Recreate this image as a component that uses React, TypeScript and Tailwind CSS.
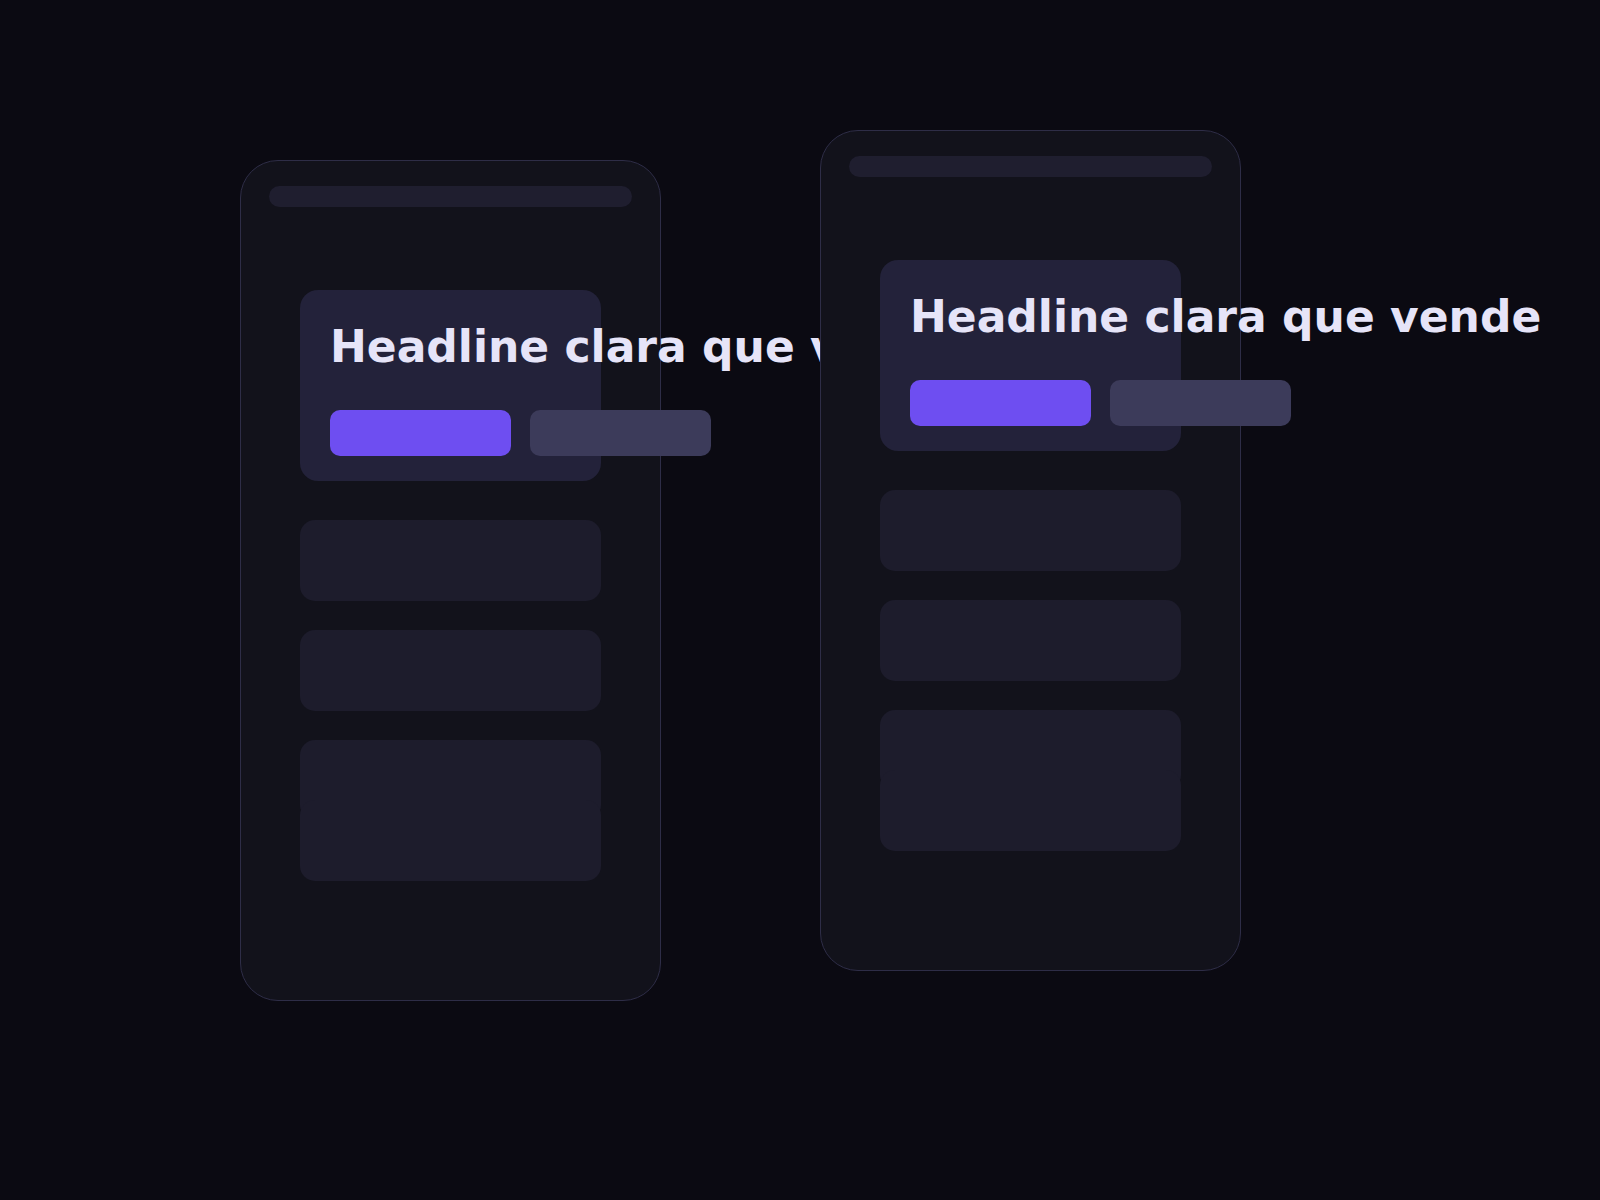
import React from "react";

const Phone = ({ className = "" }: { className?: string }) => {
  return (
    <div
      className={`w-[421px] h-[841px] shrink-0 rounded-[38px] border border-[#2e2d47] bg-[#12121b] px-[28px] pt-[25px] ${className}`}
    >
      <div className="h-[21px] rounded-full bg-[#1f1e2f]" />
      <div className="mx-auto mt-[83px] w-[301px] flex flex-col">
        <div className="rounded-[18px] bg-[#23223a] px-[30px] pt-[30px] pb-[25px]">
          <h1 className="whitespace-nowrap text-[44px] leading-[53px] font-bold text-[#e6e4f8] [font-family:'DejaVu_Sans',sans-serif]">
            Headline clara que vende
          </h1>
          <div className="mt-[37px] flex gap-[19px]">
            <div className="h-[46px] w-[181px] shrink-0 rounded-[10px] bg-[#6e4ef1]" />
            <div className="h-[46px] w-[181px] shrink-0 rounded-[10px] bg-[#3c3b5a]" />
          </div>
        </div>
        <div className="mt-[39px] h-[81px] rounded-[15px] bg-[#1d1c2c]" />
        <div className="mt-[29px] h-[81px] rounded-[15px] bg-[#1d1c2c]" />
        <div className="mt-[29px] h-[80px] rounded-[15px] bg-[#1d1c2c]" />
        <div className="-mt-[20px] h-[81px] rounded-[15px] bg-[#1d1c2c]" />
      </div>
    </div>
  );
};

export default function App() {
  return (
    <div className="min-h-[1200px] w-full bg-[#0b0a12] overflow-hidden">
      <div className="flex items-start gap-[159px] pl-[240px] pt-[160px]">
        <Phone />
        <Phone className="relative -mt-[30px]" />
      </div>
    </div>
  );
}
